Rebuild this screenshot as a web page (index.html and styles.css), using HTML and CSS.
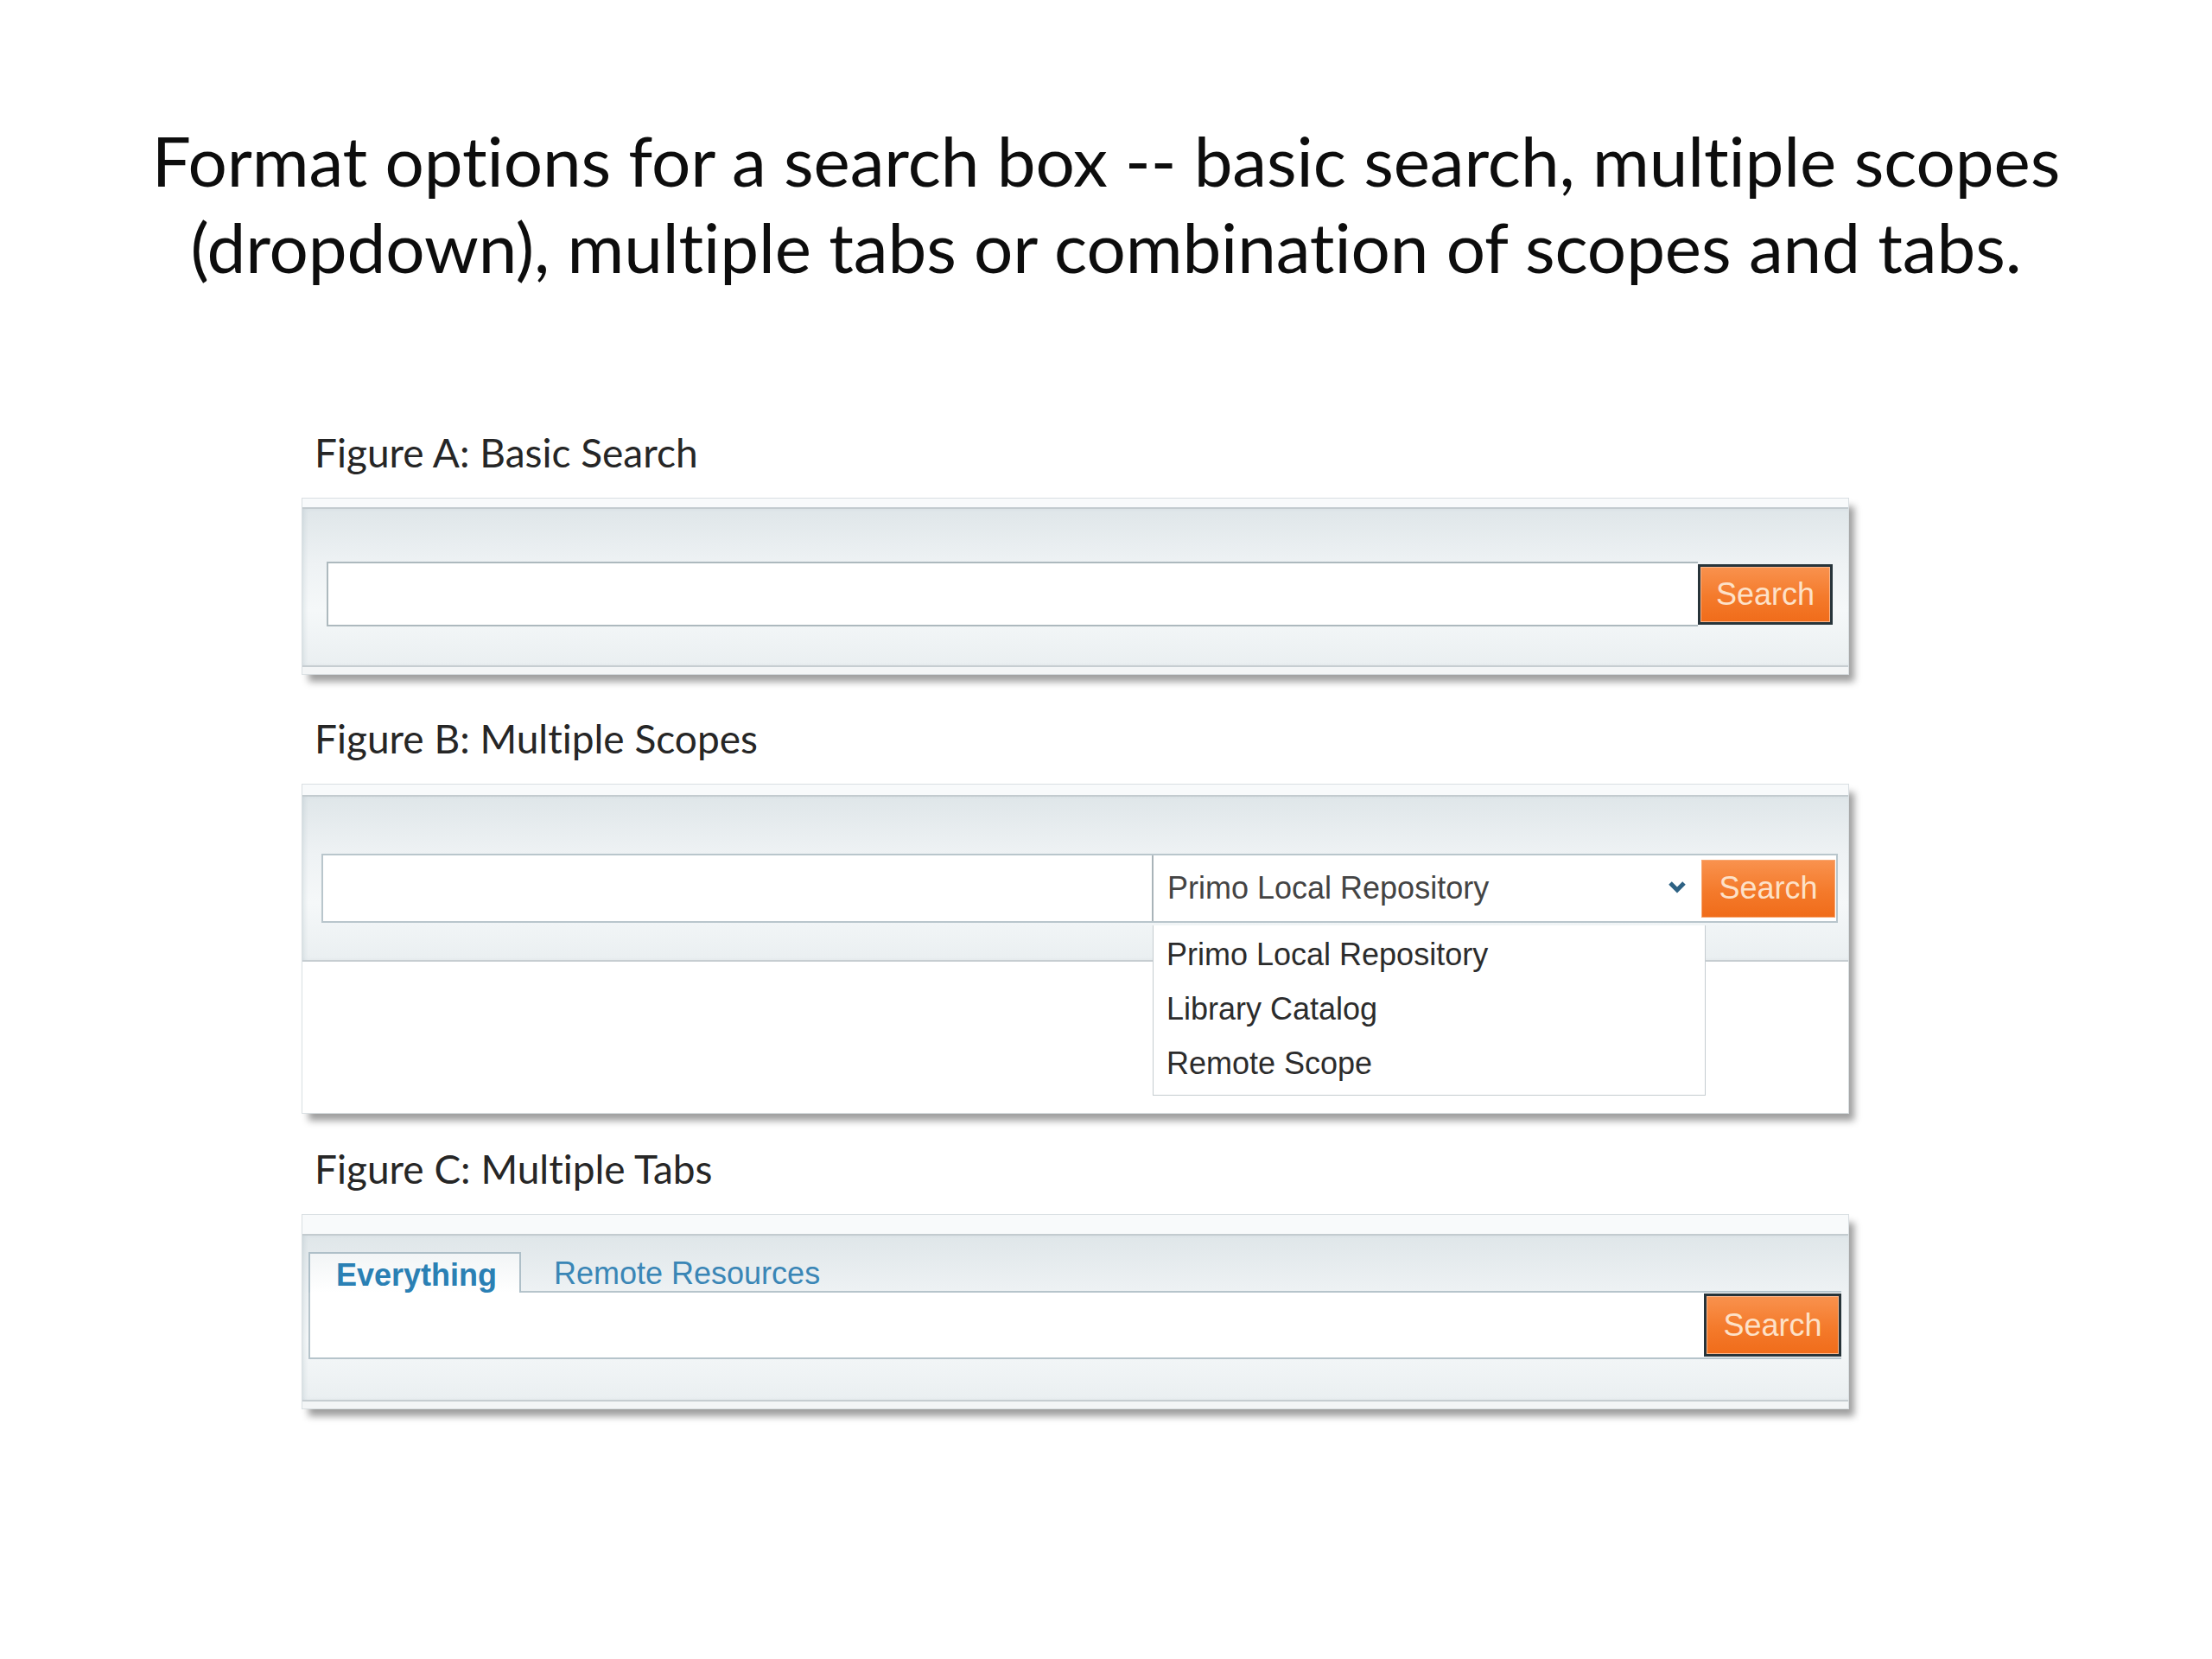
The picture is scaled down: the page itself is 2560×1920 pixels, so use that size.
FILE: index.html
```html
<!DOCTYPE html>
<html lang="en">
<head>
    <meta charset="UTF-8">
    <title>Search Box Formats</title>
    <link rel="stylesheet" href="styles.css">
</head>
<body>
    <div class="slide">
        <h1 class="title">Format options for a search box -- basic search, multiple scopes<br>(dropdown), multiple tabs or combination of scopes and tabs.</h1>

        <div class="figures">
            <!-- Figure A -->
            <div class="fig-label label-a">Figure A: Basic Search</div>
            <div class="search-box box-a">
                <div class="box-top"></div>
                <div class="box-body">
                    <div class="search-row">
                        <div class="search-input"></div>
                        <button class="search-btn focused">Search</button>
                    </div>
                </div>
                <div class="box-bottom"></div>
            </div>

            <!-- Figure B -->
            <div class="fig-label label-b">Figure B: Multiple Scopes</div>
            <div class="search-box box-b">
                <div class="box-top"></div>
                <div class="box-body">
                    <div class="scope-row">
                        <div class="scope-input"></div>
                        <div class="scope-select">
                            <span>Primo Local Repository</span>
                            <svg class="chevron" width="24" height="16" viewBox="0 0 24 16">
                                <polyline points="4,4 12,12 20,4" fill="none" stroke="#2d6284" stroke-width="5"/>
                            </svg>
                        </div>
                        <button class="search-btn plain">Search</button>
                    </div>
                </div>
                <div class="box-open"></div>
                <ul class="scope-list">
                    <li>Primo Local Repository</li>
                    <li>Library Catalog</li>
                    <li>Remote Scope</li>
                </ul>
            </div>

            <!-- Figure C -->
            <div class="fig-label label-c">Figure C: Multiple Tabs</div>
            <div class="search-box box-c">
                <div class="box-top"></div>
                <div class="box-body">
                    <div class="tabs">
                        <div class="tab active">Everything</div>
                        <div class="tab">Remote Resources</div>
                    </div>
                    <div class="tab-input">
                        <button class="search-btn focused">Search</button>
                    </div>
                </div>
                <div class="box-bottom"></div>
            </div>
        </div>
    </div>
</body>
</html>
```

FILE: styles.css
```css
body { margin: 0; background: #fff; }
.slide { width: 2560px; height: 1920px; font-family: Lato, "Open Sans", sans-serif; font-variant-ligatures: none; color: #111; }

.title { margin: 0; padding-top: 135px; font-size: 80px; line-height: 100px; font-weight: normal; text-align: center; color: #0d0d0d; letter-spacing: -0.1px; }

.figures { margin-left: 349px; width: 1791px; }
.fig-label { padding-left: 15px; font-size: 46px; line-height: 56px; color: #262626; margin-bottom: 24px; }
.label-a { margin-top: 161px; }
.label-b { margin-top: 46px; }
.label-c { margin-top: 36px; }

/* search box frame */
.search-box { position: relative; border: 1px solid #d9dfe2; background: #fff; box-shadow: 7px 9px 8px -1px rgba(0, 0, 0, 0.38); }
.box-top { height: 10px; background: #f8fafb; border-bottom: 2px solid #c3cbcf; }
.box-body { background: linear-gradient(#dfe6e9, #eef2f4 35%, #f5f8f9 65%, #eaeff1); box-shadow: inset 4px 0 6px -3px rgba(150, 170, 180, 0.35); }
.box-bottom { height: 8px; background: #f3f5f6; border-top: 2px solid #c6cdd1; }

/* A */
.box-a .box-body { padding: 61px 18px 45px 28px; }
.search-row { display: flex; align-items: center; }
.search-input { flex: 1; height: 71px; background: #fff; border: 2px solid #adb9be; border-right: none; }

.search-btn { font-family: "Liberation Sans", Arial, sans-serif; font-size: 36px; color: #fde1c8; padding: 0; cursor: pointer;
    background: linear-gradient(#f9924e, #f47a2b 55%, #f06c1a); border: 1px solid #f7a772; }
.search-btn.focused { width: 156px; height: 70px; border: 3px solid #27343a; box-shadow: inset 0 0 0 1px #fbb78c; }

/* B */
.box-b .box-top { height: 12px; }
.box-b .box-body { padding: 66px 12px 43px 22px; }
.scope-row { display: flex; align-items: center; height: 76px; border: 2px solid #b9c6cc; background: #fff; }
.scope-input { width: 959px; height: 100%; border-right: 2px solid #a9b4b9; }
.scope-select { width: 634px; height: 100%; display: flex; align-items: center; justify-content: space-between; padding: 0 16px 0 16px; box-sizing: border-box;
    font-family: "Liberation Sans", Arial, sans-serif; font-size: 36px; color: #444; }
.chevron { margin-top: -4px; }
.search-btn.plain { width: 155px; height: 67px; }
.box-open { height: 175px; border-top: 2px solid #c6cdd1; background: #fff; }
.scope-list { position: absolute; left: 984px; top: 163px; width: 638px; margin: 0; padding: 2px 0 5px 0; list-style: none; background: #fff;
    border: 1px solid #c5ccd0; border-top: none; }
.scope-list li { padding-left: 15px; font-family: "Liberation Sans", Arial, sans-serif; font-size: 36px; line-height: 63px; color: #2c2c2c; }

/* C */
.box-c .box-top { height: 22px; }
.box-c .box-body { padding: 19px 8px 47px 7px; }
.tabs { display: flex; height: 45px; border-bottom: 2px solid #b6c4cb; }
.tab { padding: 4px 0 0 38px; font-family: "Liberation Sans", Arial, sans-serif; font-size: 36px; line-height: 41px; color: #3a86b6; }
.tab.active { width: 246px; box-sizing: border-box; padding-left: 30px; margin-bottom: -2px; height: 47px; font-weight: bold; color: #2a80b4;
    border: 2px solid #aebfc8; border-bottom: none; background: linear-gradient(#f2f5f6, #fff); }
.tab-input { display: flex; justify-content: flex-end; align-items: center; height: 75px; background: #fff; border-left: 2px solid #b6c4cb; border-bottom: 2px solid #b6c4cb; }
.box-c .search-btn.focused { width: 159px; height: 73px; }
```
